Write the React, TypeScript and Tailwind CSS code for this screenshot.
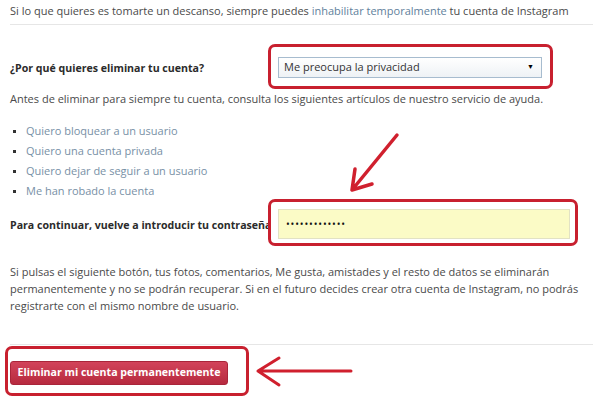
import React from "react"

const links = [
    "Quiero bloquear a un usuario",
    "Quiero una cuenta privada",
    "Quiero dejar de seguir a un usuario",
    "Me han robado la cuenta",
]

const App = () => {
    return (
        <div className="relative w-[600px] h-[406px] overflow-hidden bg-white font-['Open_Sans',sans-serif] text-[11px] text-[#4a4a4a]">
            <div className="px-[10px]">
                <p className="pt-[2px] leading-[17px] whitespace-nowrap">
                    Si lo que quieres es tomarte un descanso, siempre puedes{" "}
                    <span className="text-[#5f7f9c]">inhabilitar temporalmente</span> tu cuenta de Instagram
                </p>
                <div className="mt-[5px] mr-[-3px] border-t border-[#e6e6e6]" />

                <div className="mt-[19px] flex items-center">
                    <div className="w-[258px] flex-none pt-[5px] text-[10.6px] font-bold text-[#2b2b2b]">
                        ¿Por qué quieres eliminar tu cuenta?
                    </div>
                    <div className="w-[285px] h-[45px] flex-none rounded-[7px] border-[3px] border-[#c8202f] pl-[7px] pr-[8px] pt-[10px] pb-[5px]">
                        <div className="flex h-[21px] items-center justify-between border border-[#a7bccf] bg-gradient-to-b from-white to-[#eef2f5] pl-[5px] pr-[7px] text-[#333]">
                            <span>Me preocupa la privacidad</span>
                            <span className="text-[7px] text-black">▼</span>
                        </div>
                    </div>
                </div>

                <p className="mt-[1px] leading-[17px] whitespace-nowrap">
                    Antes de eliminar para siempre tu cuenta, consulta los siguientes artículos de nuestro servicio de ayuda.
                </p>

                <ul className="mt-[14px] flex flex-col">
                    {links.map((l) => (
                        <li key={l} className="flex h-[20px] items-center leading-[20px]">
                            <span className="ml-[3px] mr-[10px] h-[3px] w-[3px] bg-[#333]" />
                            <span className="text-[#7890a6]">{l}</span>
                        </li>
                    ))}
                </ul>

                <div className="mt-[-2px] flex items-center">
                    <div className="relative z-0 w-[258px] flex-none whitespace-nowrap pt-[7px] text-[10.6px] font-bold text-[#2b2b2b]">
                        Para continuar, vuelve a introducir tu contraseña
                    </div>
                    <div className="relative z-10 w-[310px] h-[47px] flex-none rounded-[7px] border-[3px] border-[#c8202f] bg-white pl-[7px] pr-[5px] pt-[7px] pb-[4px]">
                        <div className="flex h-[30px] items-center border border-[#e2e2c4] bg-[#fbfbc6] pl-[7px] text-[10px] tracking-[0.85px] text-[#111]">
                            •••••••••••••
                        </div>
                    </div>
                </div>

                <p className="mt-[17px] leading-[17px] whitespace-nowrap">
                    Si pulsas el siguiente botón, tus fotos, comentarios, Me gusta, amistades y el resto de datos se eliminarán
                    <br />
                    permanentemente y no se podrán recuperar. Si en el futuro decides crear otra cuenta de Instagram, no podrás
                    <br />
                    registrarte con el mismo nombre de usuario.
                </p>

                <div className="mt-[30px] mr-[-3px] border-t border-[#e6e6e6]" />

                <div className="ml-[-5px] mt-[1px] flex items-center">
                    <div className="w-[244px] h-[50px] flex-none rounded-[7px] border-[3px] border-[#c8202f] pl-[2px] pr-[18px] pt-[12px] pb-[8px]">
                        <button className="flex h-[24px] w-full items-center justify-center whitespace-nowrap rounded-[3px] border border-[#a9253a] bg-gradient-to-b from-[#d2435a] to-[#b72a3f] text-[10.6px] font-bold text-white">
                            Eliminar mi cuenta permanentemente
                        </button>
                    </div>
                    <svg width="100" height="34" viewBox="0 0 100 34" className="ml-[6px] flex-none">
                        <path d="M3 17 L96 17 M3 17 L24 4 M3 17 L24 31" stroke="#d0202e" strokeWidth="3" fill="none" strokeLinecap="round" />
                    </svg>
                </div>
            </div>

            <svg width="600" height="406" className="pointer-events-none absolute left-0 top-0">
                <path d="M397 135 L352 190 M352 190 L355 169 M352 190 L372 184" stroke="#d0202e" strokeWidth="3.5" fill="none" strokeLinecap="round" />
            </svg>
        </div>
    )
}

export default App
